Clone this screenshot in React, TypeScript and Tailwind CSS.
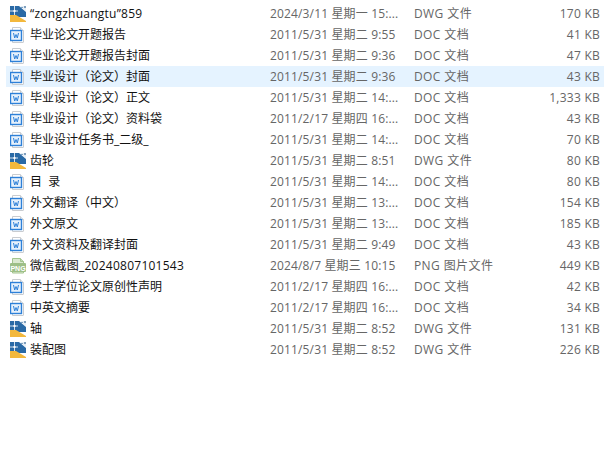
type FileRow = {
  name: string;
  date: string;
  type: string;
  size: string;
  kind: "dwg" | "doc" | "png";
  active?: boolean;
  latin?: boolean;
};

const files: FileRow[] = [
  { name: "“zongzhuangtu”859", date: "2024/3/11 星期一 15:...", type: "DWG 文件", size: "170 KB", kind: "dwg", latin: true },
  { name: "毕业论文开题报告", date: "2011/5/31 星期二 9:55", type: "DOC 文档", size: "41 KB", kind: "doc" },
  { name: "毕业论文开题报告封面", date: "2011/5/31 星期二 9:36", type: "DOC 文档", size: "47 KB", kind: "doc" },
  { name: "毕业设计（论文）封面", date: "2011/5/31 星期二 9:36", type: "DOC 文档", size: "43 KB", kind: "doc", active: true },
  { name: "毕业设计（论文）正文", date: "2011/5/31 星期二 14:...", type: "DOC 文档", size: "1,333 KB", kind: "doc" },
  { name: "毕业设计（论文）资料袋", date: "2011/2/17 星期四 16:...", type: "DOC 文档", size: "43 KB", kind: "doc" },
  { name: "毕业设计任务书_二级_", date: "2011/5/31 星期二 14:...", type: "DOC 文档", size: "70 KB", kind: "doc" },
  { name: "齿轮", date: "2011/5/31 星期二 8:51", type: "DWG 文件", size: "80 KB", kind: "dwg" },
  { name: "目  录", date: "2011/5/31 星期二 14:...", type: "DOC 文档", size: "80 KB", kind: "doc" },
  { name: "外文翻译（中文）", date: "2011/5/31 星期二 13:...", type: "DOC 文档", size: "154 KB", kind: "doc" },
  { name: "外文原文", date: "2011/5/31 星期二 13:...", type: "DOC 文档", size: "185 KB", kind: "doc" },
  { name: "外文资料及翻译封面", date: "2011/5/31 星期二 9:49", type: "DOC 文档", size: "43 KB", kind: "doc" },
  { name: "微信截图_20240807101543", date: "2024/8/7 星期三 10:15", type: "PNG 图片文件", size: "449 KB", kind: "png", latin: true },
  { name: "学士学位论文原创性声明", date: "2011/2/17 星期四 16:...", type: "DOC 文档", size: "42 KB", kind: "doc" },
  { name: "中英文摘要", date: "2011/2/17 星期四 16:...", type: "DOC 文档", size: "34 KB", kind: "doc" },
  { name: "轴", date: "2011/5/31 星期二 8:52", type: "DWG 文件", size: "131 KB", kind: "dwg" },
  { name: "装配图", date: "2011/5/31 星期二 8:52", type: "DWG 文件", size: "226 KB", kind: "dwg" },
];

function DwgIcon() {
  return (
    <svg width="16" height="16" viewBox="0 0 16 16" className="shrink-0">
      <path d="M0 0h9l7 6v5H0z" fill="#2a6aa6" />
      <path d="M10 0h6v5z" fill="#e4edf5" />
      <path d="M11 1h2v1h-2zM14 0h2v2h-2z" fill="#7f9fbd" />
      <path d="M0 9h6l10 6v1H0z" fill="#f3b83c" />
      <path d="M0 5h8M4.500 0v9" stroke="#ffffff" strokeWidth="0.800" />
      <rect x="3.500" y="4" width="2" height="2" fill="#ffffff" />
    </svg>
  );
}

function DocIcon() {
  return (
    <svg width="16" height="16" viewBox="0 0 16 16" className="shrink-0">
      <path d="M2.500 0.500h8l3 3v11.500a.5.5 0 0 1-.5.5h-10.500z" fill="#ffffff" stroke="#c9ccd0" />
      <path d="M10.500 0.500v3h3" fill="#f2f3f4" stroke="#c9ccd0" />
      <rect x="0.500" y="3.500" width="11" height="10" fill="#e6f1fc" stroke="#2d80d8" strokeWidth="1.400" />
      <path d="M3.500 6l1.200 5 1.300-3.500 1.300 3.500 1.200-5" fill="none" stroke="#2d80d8" strokeWidth="1" />
    </svg>
  );
}

function PngIcon() {
  return (
    <svg width="16" height="16" viewBox="0 0 16 16" className="shrink-0">
      <path d="M2.500 0.500h8l3 3v11.500h-11z" fill="#dbe9d0" stroke="#a3c48e" />
      <path d="M10.500 0.500v3h3" fill="#c2d8b2" stroke="#a3c48e" />
      <rect x="0" y="5" width="16" height="9" rx="1" fill="#9dbf87" />
      <text x="8" y="12.500" textAnchor="middle" fontSize="7" fontWeight="700" fill="#ffffff" fontFamily="'Liberation Sans', sans-serif">PNG</text>
    </svg>
  );
}

export default function App() {
  return (
    <div className="w-[611px] h-[466px] bg-white pt-[3px] pl-[6px] overflow-hidden text-[12px] font-['Open_Sans','Noto_Sans_CJK_SC',sans-serif]">
      {files.map((file) => (
        <div
          key={file.name}
          className={`flex items-center w-[598px] h-[21px] pl-1 whitespace-pre ${file.active ? "bg-[#e5f3ff]" : ""}`}
        >
          <div className="flex items-center gap-1 w-[260px] text-[#111111]">
            {file.kind === "dwg" && <DwgIcon />}
            {file.kind === "doc" && <DocIcon />}
            {file.kind === "png" && <PngIcon />}
            <span className={file.latin ? "tracking-[0.25px]" : ""}>{file.name}</span>
          </div>
          <span className="w-[144px] text-[#666666] tracking-[0.15px]">{file.date}</span>
          <span className="w-[120px] text-[#666666] tracking-[0.4px]">{file.type}</span>
          <span className="w-[66px] text-right text-[#666666] tracking-[0.25px]">{file.size}</span>
        </div>
      ))}
    </div>
  );
}
